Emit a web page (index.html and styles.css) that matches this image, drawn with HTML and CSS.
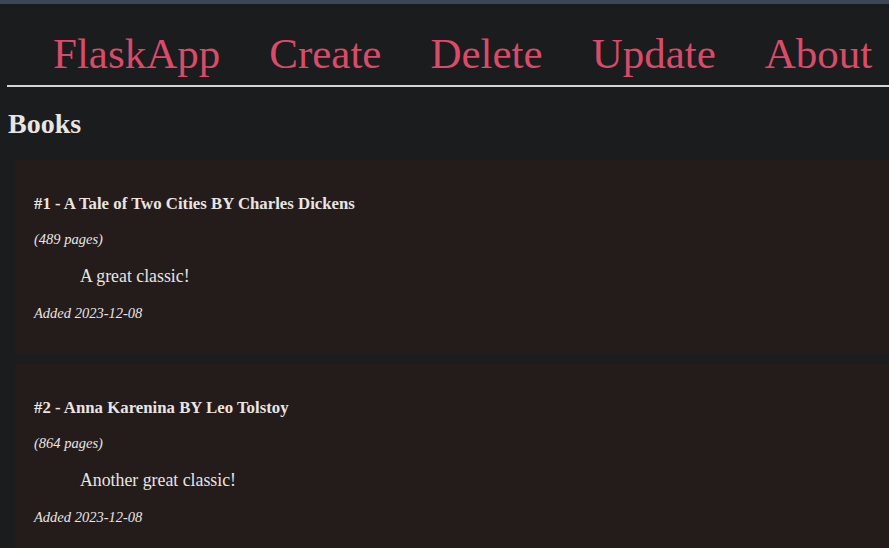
FILE: index.html
```html
<!DOCTYPE html>
<html>
<head>
<meta charset="utf-8">
<title>FlaskApp</title>
<link rel="stylesheet" href="styles.css">
</head>
<body>
<div class="topstrip"></div>
<nav class="nav">
  <a href="#">FlaskApp</a>
  <a href="#">Create</a>
  <a href="#">Delete</a>
  <a href="#">Update</a>
  <a href="#">About</a>
</nav>
<hr class="rule">
<main class="content">
  <h2 class="title">Books</h2>
  <div class="books">
    <div class="book">
      <h4 class="book-title">#1 - A Tale of Two Cities BY Charles Dickens</h4>
      <p class="meta">(489 pages)</p>
      <p class="review">A great classic!</p>
      <p class="meta">Added 2023-12-08</p>
    </div>
    <div class="book">
      <h4 class="book-title">#2 - Anna Karenina BY Leo Tolstoy</h4>
      <p class="meta">(864 pages)</p>
      <p class="review">Another great classic!</p>
      <p class="meta">Added 2023-12-08</p>
    </div>
  </div>
</main>
</body>
</html>
```
FILE: styles.css
```css
html, body {
  margin: 0;
  padding: 0;
  background: #1b1c1e;
  color: #e8e6e3;
  font-family: "Liberation Serif", "Times New Roman", serif;
  overflow: hidden;
}
.topstrip {
  height: 4px;
  background: #3b4653;
}
.nav {
  display: flex;
  gap: 49px;
  padding: 28px 0 0 53px;
  font-size: 43px;
  line-height: 43px;
  white-space: nowrap;
}
.nav a {
  color: #d94b68;
  text-decoration: none;
}
.rule {
  margin: 10px 0 0 7px;
  border: 0;
  height: 2px;
  background: #d6d6d6;
}
.content {
  padding-left: 8px;
}
.title {
  margin: 0;
  padding-top: 23px;
  font-size: 28px;
  line-height: 28px;
  font-weight: bold;
}
.books {
  display: flex;
  flex-direction: column;
  gap: 10px;
  margin-top: 22px;
  margin-left: 7px;
}
.book {
  background: #241b1b;
  padding: 34px 0 32px 19px;
  height: 128px;
}
.book-title {
  margin: 0;
  font-size: 16.8px;
  line-height: 20px;
  font-weight: bold;
}
.meta {
  margin: 16px 0 0;
  font-size: 14.5px;
  line-height: 18px;
  font-style: italic;
}
.review {
  margin: 17px 0 0 46px;
  font-size: 17.8px;
  line-height: 22px;
}
.review + .meta {
  margin-top: 17px;
}
```
